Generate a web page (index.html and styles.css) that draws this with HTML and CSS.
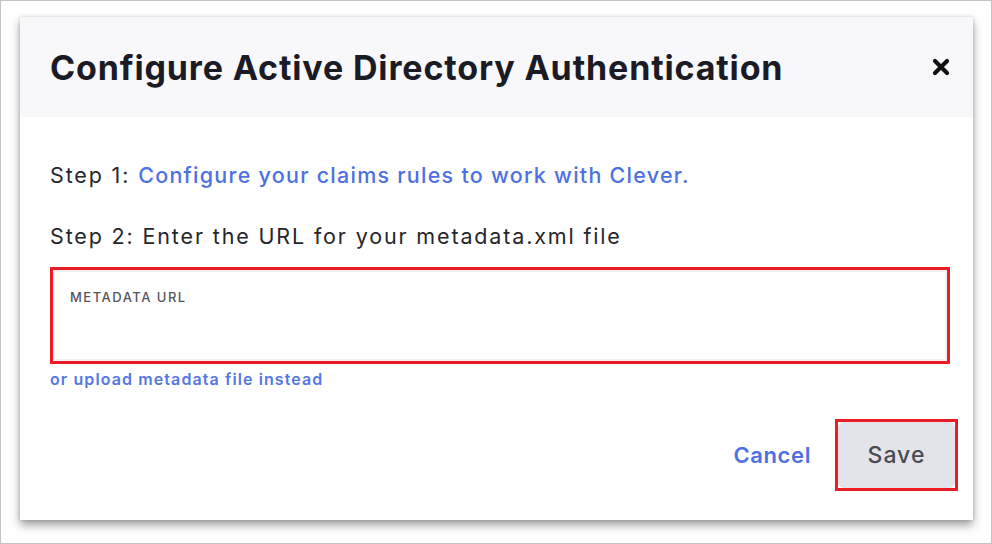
FILE: index.html
```html
<!DOCTYPE html>
<html>
<head>
<meta charset="utf-8">
<link rel="stylesheet" href="styles.css">
</head>
<body>
<div class="frame">
  <div class="dialog">
    <div class="header">
      <h1 class="title">Configure Active Directory Authentication</h1>
      <svg class="close" viewBox="0 0 18 18" width="18" height="18"><path d="M3 3 L15 15 M15 3 L3 15" stroke="#111" stroke-width="4.2" stroke-linecap="round"/></svg>
    </div>
    <div class="body">
      <p class="step step1">Step 1: <a class="link">Configure your claims rules to work with Clever.</a></p>
      <p class="step step2">Step 2: Enter the URL for your metadata.xml file</p>
      <div class="field">
        <div class="field-label">METADATA URL</div>
      </div>
      <a class="upload">or upload metadata file instead</a>
      <div class="actions">
        <a class="cancel">Cancel</a>
        <div class="save-frame"><button class="save">Save</button></div>
      </div>
    </div>
  </div>
</div>
</body>
</html>
```
FILE: styles.css
```css
* { box-sizing: border-box; }
html, body { margin: 0; padding: 0; background: #fff; }
body { font-family: Inter, "Open Sans", sans-serif; }
.frame {
  width: 992px; height: 544px;
  border: 1px solid #c4c4c4;
  padding: 16px 0 0 19px;
  background: #fff;
}
.dialog {
  width: 953px; height: 503px;
  background: #fff;
  box-shadow: 0 5px 9px rgba(0,0,0,0.38), 0 0 3px rgba(0,0,0,0.15);
  display: flex; flex-direction: column;
}
.header {
  height: 100px;
  background: #f8f8fa;
  display: flex; align-items: center; justify-content: space-between;
  padding: 0 23px 0 30px;
}
.title {
  margin: 0;
  font-size: 34px; font-weight: 700;
  color: #1b1b26;
  letter-spacing: 0.85px;
}
.close { display: block; margin-top: 0; }
.body { padding: 0 23px 0 30px; display: flex; flex-direction: column; }
.step { margin: 0; font-size: 21.5px; color: #26262c; line-height: 24px; letter-spacing: 1.85px; }
.step1 { margin-top: 46px; }
.step2 { margin-top: 37px; }
.link { color: #4d70e2; font-weight: 500; letter-spacing: 1.25px; }
.field {
  margin-top: 19px;
  height: 97px;
  border: 3px solid #ec1c24;
  box-shadow: inset 0 0 0 2px #f1f1f4;
  padding: 19px 0 0 17px;
}
.field-label { font-size: 13px; color: #55555e; font-weight: 500; letter-spacing: 1.5px; }
.upload {
  margin-top: 5px;
  font-size: 16px; font-weight: 600; color: #5577e4; letter-spacing: 1.1px;
}
.actions {
  margin-top: 30px;
  margin-right: -8px;
  display: flex; justify-content: flex-end; align-items: center;
}
.cancel { font-size: 22px; font-weight: 600; color: #4d70e2; margin-right: 24px; letter-spacing: 0.6px; }
.save-frame { border: 3px solid #ec1c24; padding: 0; width: 123px; height: 72px; }
.save {
  width: 100%; height: 100%;
  border: none; border-radius: 6px;
  background: #e2e4e9;
  font-family: inherit; font-size: 23px; font-weight: 500; color: #4a4a54; letter-spacing: 1px;
}
```
